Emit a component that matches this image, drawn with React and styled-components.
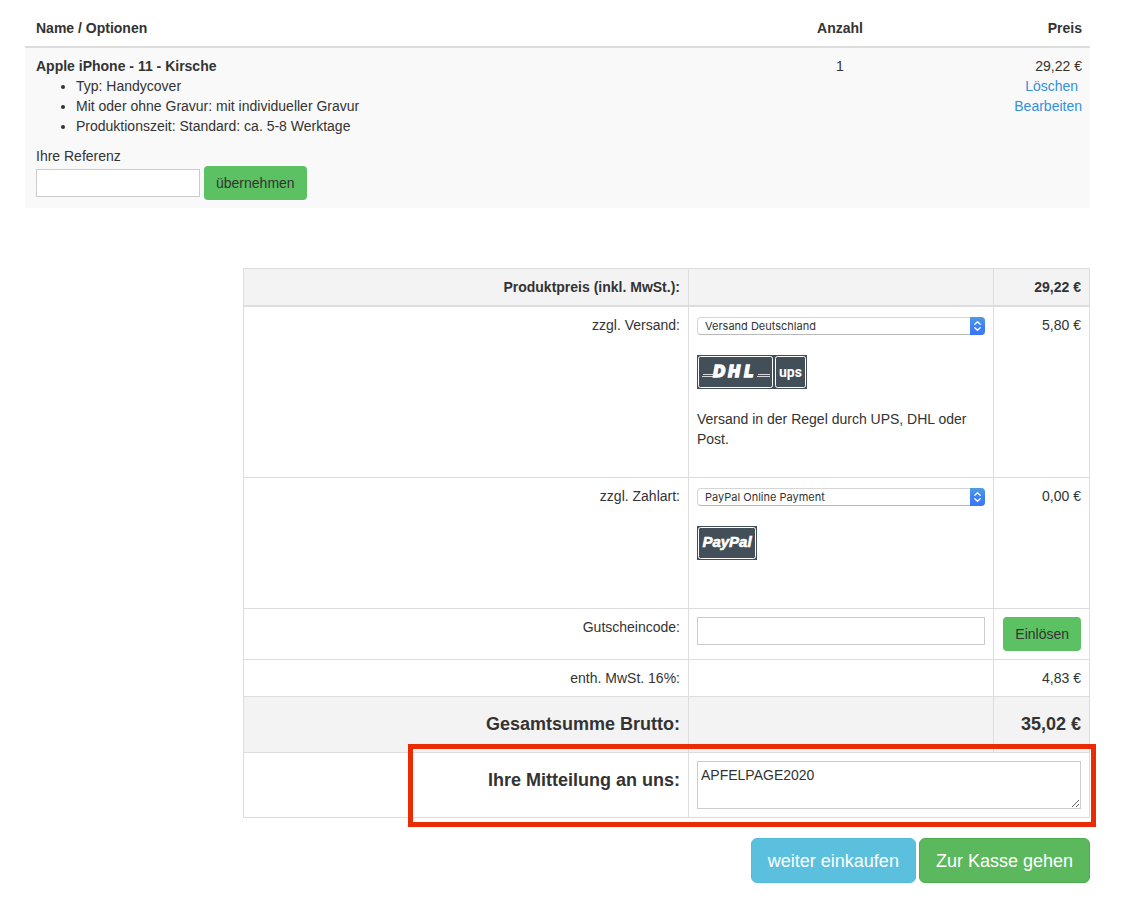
import React from 'react'
import styled, { createGlobalStyle, css } from 'styled-components'

const GlobalStyle = createGlobalStyle`
  * {
    box-sizing: border-box;
  }

  body {
    margin: 0;
    background: #fff;
    color: #333;
    font-family: "Liberation Sans", Arial, sans-serif;
    font-size: 14px;
    line-height: 20px;
  }

  button, input, select, textarea {
    font: inherit;
    color: inherit;
  }
`

const Page = styled.main`
  padding: 10px 32px 20px 25px;
`

const CartTable = styled.table`
  width: 100%;
  table-layout: fixed;
  border-collapse: collapse;
`

const cellAlign = css`
  text-align: ${props => props.$align || 'left'};
  vertical-align: top;
  padding: 8px;

  &:first-child {
    padding-left: 11px;
  }
`

const CartHead = styled.th`
  ${cellAlign}
  width: ${props => props.$width || 'auto'};
  border-bottom: 2px solid #ddd;
`

const CartCell = styled.td`
  ${cellAlign}
  background: #f9f9f9;
`

const Options = styled.ul`
  margin: 0 0 10px;
  padding-left: 40px;
`

const ReferenceRow = styled.div`
  display: flex;
  align-items: center;
  gap: 4px;
`

const TextInput = styled.input`
  display: block;
  width: ${props => props.$width || '100%'};
  height: 28px;
  margin: 0;
  padding: 2px 4px;
  border: 1px solid #ccc;
  background: #fff;
`

const Button = styled.button`
  height: 34px;
  padding: 0 12px;
  border: 0;
  border-radius: 4px;
  background: #5bc162;
  white-space: nowrap;
`

const PriceLink = styled.a`
  color: #3490dc;
  text-decoration: none;
`

const TotalsWrap = styled.div`
  position: relative;
  margin: 60px 0 20px 218px;
`

const TotalsTable = styled.table`
  width: 100%;
  table-layout: fixed;
  border-collapse: collapse;
`

const TotalsCell = styled.td`
  padding: 8px;
  border: 1px solid #ddd;
  vertical-align: top;
  text-align: ${props => (props.$left ? 'left' : 'right')};
  background: ${props => (props.$shaded ? '#f3f3f3' : 'transparent')};
`

const TotalsHead = styled(TotalsCell)`
  border-bottom-width: 2px;
  font-weight: bold;
`

const Column = styled.col`
  width: ${props => props.$width || 'auto'};
`

const BigText = styled.div`
  display: block;
  margin: 10px 0;
  font-size: 18px;
  line-height: 19px;
  font-weight: bold;
`

const Choice = styled.div`
  display: flex;
  flex-direction: column;
  align-items: flex-start;
  gap: 20px;
  padding: 2px 0 ${props => props.$bottom};
`

const SelectBox = styled.div`
  position: relative;
  width: 100%;
  height: 18px;

  select {
    appearance: none;
    display: block;
    width: 100%;
    height: 18px;
    margin: 0;
    padding: 0 20px 0 7px;
    border: 1px solid #d5d5d5;
    border-bottom-color: #b9b9b9;
    border-radius: 4px;
    background: #fff;
    font-family: Inter, sans-serif;
    font-size: 11px;
    line-height: 16px;
  }

  svg {
    position: absolute;
    top: 0;
    right: 0;
    pointer-events: none;
  }
`

const Note = styled.p`
  margin: 0;
`

const Message = styled.textarea`
  display: block;
  width: 100%;
  height: 48px;
  margin: 0;
  padding: 3px;
  border: 1px solid #ccc;
  resize: vertical;
`

const Highlight = styled.div`
  position: absolute;
  right: -6px;
  bottom: -9px;
  width: 688px;
  height: 83px;
  border: 5px solid #e92c04;
  pointer-events: none;
`

const Actions = styled.div`
  display: flex;
  justify-content: flex-end;
  gap: 3px;
`

const ActionButton = styled.button`
  height: 45px;
  padding: 0 16px;
  border: 1px solid ${props => (props.$primary ? '#4cae4c' : '#53bbdb')};
  border-radius: 6px;
  background: ${props => (props.$primary ? '#5cb85c' : '#5bc0de')};
  color: #fff;
  font-size: 18px;
  line-height: 24px;
`

const Select = ({ id, label, value }) => (
  <SelectBox>
    <select id={id} aria-label={label} defaultValue={value}>
      <option>{value}</option>
    </select>
    <svg width="15" height="18" viewBox="0 0 15 18" aria-hidden="true">
      <defs>
        <linearGradient id={`${id}-fill`} x1="0" y1="0" x2="0" y2="1">
          <stop offset="0" stopColor="#4d9de0" />
          <stop offset="0.5" stopColor="#3f82f5" />
          <stop offset="1" stopColor="#3c76fb" />
        </linearGradient>
      </defs>
      <path d="M0 0h11a4 4 0 0 1 4 4v10a4 4 0 0 1-4 4H0z" fill={`url(#${id}-fill)`} />
      <path
        d="M4.8 7.2 7.5 4.7l2.7 2.5M4.8 10.8l2.7 2.5 2.7-2.5"
        fill="none"
        stroke="#fff"
        strokeWidth="1.3"
        strokeLinecap="round"
        strokeLinejoin="round"
      />
    </svg>
  </SelectBox>
)

const CarrierLogos = () => (
  <svg width="110" height="34" viewBox="0 0 110 34" role="img" aria-label="DHL und UPS">
    <rect width="110" height="34" fill="#434f58" />
    <g fill="none" stroke="#fff">
      <rect x="1.5" y="1.5" width="74" height="31" rx="2" />
      <rect x="78.5" y="1.5" width="30" height="31" rx="2" />
    </g>
    <path d="M6 19.5h10M5 21.5h11M61 19.5h12M60 21.5h13" stroke="#d5d8da" />
    <text
      x="16 31 47"
      y="22"
      fill="#fff"
      stroke="#fff"
      strokeWidth="1.4"
      fontFamily="DejaVu Sans"
      fontSize="15"
      fontWeight="bold"
      fontStyle="oblique"
    >
      DHL
    </text>
    <text
      x="93.5"
      y="22"
      textAnchor="middle"
      fill="#fff"
      fontFamily="Roboto"
      fontSize="14"
      fontWeight="bold"
    >
      ups
    </text>
  </svg>
)

const PayPalLogo = () => (
  <svg width="60" height="34" viewBox="0 0 60 34" role="img" aria-label="PayPal">
    <rect width="60" height="34" fill="#434f58" />
    <rect x="1.5" y="1.5" width="57" height="31" rx="2" fill="none" stroke="#fff" />
    <text
      x="30"
      y="21"
      textAnchor="middle"
      fill="#fff"
      stroke="#fff"
      strokeWidth="0.6"
      fontFamily="Liberation Sans"
      fontSize="15"
      fontWeight="bold"
      fontStyle="italic"
    >
      PayPal
    </text>
  </svg>
)

const Cart = () => (
  <CartTable>
    <thead>
      <tr>
        <CartHead>Name / Optionen</CartHead>
        <CartHead $align="center" $width="100px">Anzahl</CartHead>
        <CartHead $align="right" $width="200px">Preis</CartHead>
      </tr>
    </thead>
    <tbody>
      <tr>
        <CartCell>
          <strong>Apple iPhone - 11 - Kirsche</strong>
          <Options>
            <li>Typ: Handycover</li>
            <li>Mit oder ohne Gravur: mit individueller Gravur</li>
            <li>Produktionszeit: Standard: ca. 5-8 Werktage</li>
          </Options>
          <label htmlFor="reference">Ihre Referenz</label>
          <ReferenceRow>
            <TextInput id="reference" type="text" $width="164px" />
            <Button type="button">übernehmen</Button>
          </ReferenceRow>
        </CartCell>
        <CartCell $align="center">1</CartCell>
        <CartCell $align="right">
          29,22 €<br />
          <PriceLink href="#delete">Löschen</PriceLink>&nbsp;<br />
          <PriceLink href="#edit">Bearbeiten</PriceLink>
        </CartCell>
      </tr>
    </tbody>
  </CartTable>
)

const Totals = () => (
  <TotalsWrap>
    <TotalsTable>
      <colgroup>
        <Column />
        <Column $width="305px" />
        <Column $width="96px" />
      </colgroup>
      <thead>
        <tr>
          <TotalsHead as="th" $shaded>Produktpreis (inkl. MwSt.):</TotalsHead>
          <TotalsHead $shaded />
          <TotalsHead as="th" $shaded>29,22 €</TotalsHead>
        </tr>
      </thead>
      <tbody>
        <tr>
          <TotalsCell>zzgl. Versand:</TotalsCell>
          <TotalsCell $left>
            <Choice $bottom="20px">
              <Select id="shipping" label="Versand" value="Versand Deutschland" />
              <CarrierLogos />
              <Note>Versand in der Regel durch UPS, DHL oder Post.</Note>
            </Choice>
          </TotalsCell>
          <TotalsCell>5,80 €</TotalsCell>
        </tr>
        <tr>
          <TotalsCell>zzgl. Zahlart:</TotalsCell>
          <TotalsCell $left>
            <Choice $bottom="40px">
              <Select id="payment" label="Zahlart" value="PayPal Online Payment" />
              <PayPalLogo />
            </Choice>
          </TotalsCell>
          <TotalsCell>0,00 €</TotalsCell>
        </tr>
        <tr>
          <TotalsCell><label htmlFor="voucher">Gutscheincode:</label></TotalsCell>
          <TotalsCell $left><TextInput id="voucher" type="text" /></TotalsCell>
          <TotalsCell><Button type="button">Einlösen</Button></TotalsCell>
        </tr>
        <tr>
          <TotalsCell>enth. MwSt. 16%:</TotalsCell>
          <TotalsCell />
          <TotalsCell>4,83 €</TotalsCell>
        </tr>
        <tr>
          <TotalsCell $shaded><BigText>Gesamtsumme Brutto:</BigText></TotalsCell>
          <TotalsCell $shaded />
          <TotalsCell $shaded><BigText>35,02 €</BigText></TotalsCell>
        </tr>
        <tr>
          <TotalsCell>
            <BigText as="label" htmlFor="message">Ihre Mitteilung an uns:</BigText>
          </TotalsCell>
          <TotalsCell $left colSpan="2">
            <Message id="message" defaultValue="APFELPAGE2020" />
          </TotalsCell>
        </tr>
      </tbody>
    </TotalsTable>
    <Highlight />
  </TotalsWrap>
)

const App = () => (
  <>
    <GlobalStyle />
    <Page>
      <Cart />
      <Totals />
      <Actions>
        <ActionButton type="button">weiter einkaufen</ActionButton>
        <ActionButton type="button" $primary>Zur Kasse gehen</ActionButton>
      </Actions>
    </Page>
  </>
)

export default App
